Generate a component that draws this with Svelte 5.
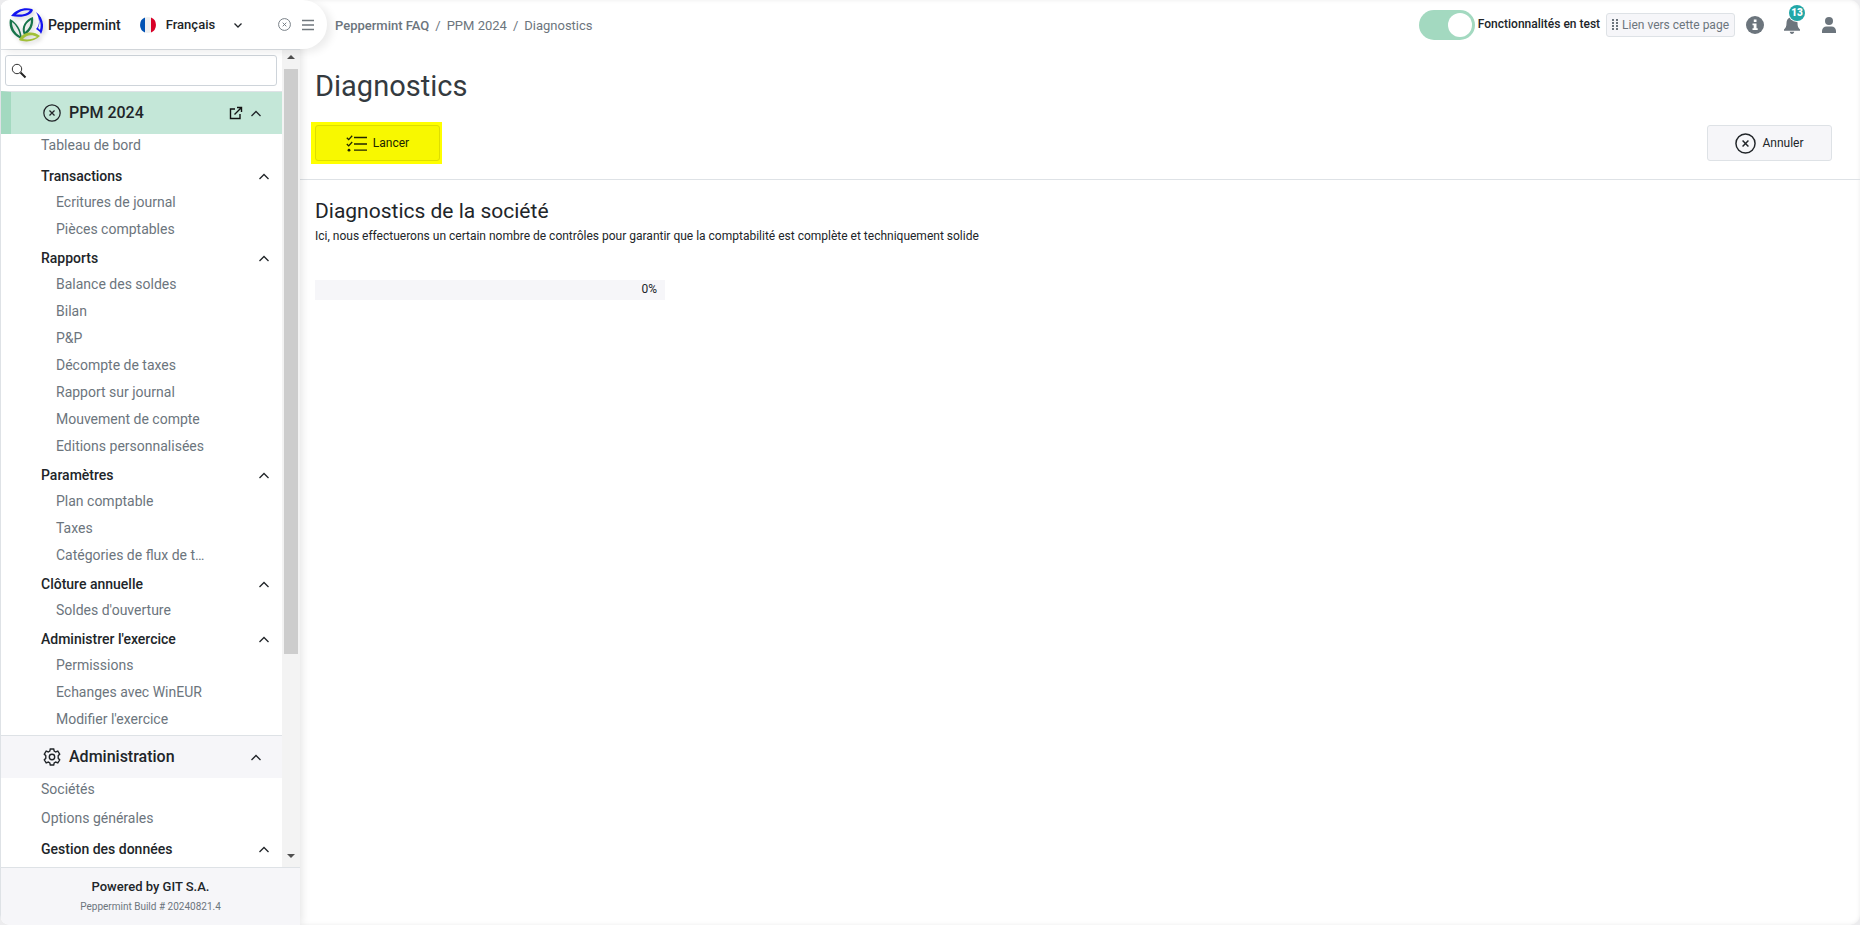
<script lang="ts">
    interface Group {
        title: string;
        items: string[];
    }

    const fiscalGroups: Group[] = [
        { title: 'Transactions', items: ['Ecritures de journal', 'Pièces comptables'] },
        {
            title: 'Rapports',
            items: [
                'Balance des soldes',
                'Bilan',
                'P&P',
                'Décompte de taxes',
                'Rapport sur journal',
                'Mouvement de compte',
                'Editions personnalisées'
            ]
        },
        { title: 'Paramètres', items: ['Plan comptable', 'Taxes', 'Catégories de flux de t…'] },
        { title: 'Clôture annuelle', items: ["Soldes d'ouverture"] },
        { title: "Administrer l'exercice", items: ['Permissions', 'Echanges avec WinEUR', "Modifier l'exercice"] }
    ];
    const adminGroups: Group[] = [{ title: 'Gestion des données', items: [] }];

    let search = $state('');
    let testing = $state(true);
    let progress = $state(0);
</script>

{#snippet chevron(up: boolean)}
    <svg class="chevron" viewBox="0 0 12 12" aria-hidden="true">
        <path d={up ? 'M1.5 9 6 4.5l4.5 4.5' : 'M2.5 4.5l3.500 3.500 3.500-3.500'} />
    </svg>
{/snippet}

{#snippet circleX(size: number)}
    <svg class="line" width={size} height={size} viewBox="0 0 20 20" aria-hidden="true">
        <circle cx="10" cy="10" r="9.1" />
        <path d="M7.2 7.2l5.6 5.6M12.8 7.2l-5.6 5.6" />
    </svg>
{/snippet}

{#snippet menu(groups: Group[])}
    {#each groups as group}
        <div class="group">
            <button class="group-title">
                {group.title}
                {@render chevron(true)}
            </button>
            {#each group.items as item}
                <a class="sub-item" href="#top">{item}</a>
            {/each}
        </div>
    {/each}
{/snippet}

<div class="page">
    <aside class="sidebar">
        <div class="brand">
            <svg class="logo" viewBox="0 0 34 34" aria-hidden="true">
                <path fill="#1414f0" d="M2 8C7 1 16-1 23 1l1 1C22 8 13 10 2 8zM7 6.500C13 7 18 6 21 2.500 16 1.500 11 3 7 6.500z" fill-rule="evenodd" />
                <path fill="#1414f0" d="M27 4c7 5 9 14 5 22-1-3-4-4-5-5 4-4 4-10 0-17zm3 7c1 4 0 7-1 9l2 2c1-4 1-7-1-11z" fill-rule="evenodd" />
                <path fill="#17744a" d="M1 11c7 4 11 10 12 20C4 28-1 20 1 11zm2 3c0 6 3 11 8 14-1-6-4-11-8-14z" fill-rule="evenodd" />
                <path fill="#17744a" d="M24 9c1 8-2 15-9 18-4-8 2-16 9-18zm-2 3c-5 3-7 7-6 12 4-3 6-7 6-12z" fill-rule="evenodd" />
                <path fill="#a2c037" d="M10 32c3-8 14-10 21-4-5 5-13 7-21 4zm4-1c5 1 10 0 14-2-5-3-11-2-14 2z" fill-rule="evenodd" />
            </svg>
            <strong>Peppermint</strong>
            <button class="language">
                <svg width="16" height="16" viewBox="0 0 16 16" aria-hidden="true">
                    <circle cx="8" cy="8" r="8" fill="#f0f0f0" />
                    <path fill="#0052b4" d="M5 .6v14.800A8 8 0 0 1 5 .6z" />
                    <path fill="#d80027" d="M11 .6v14.800A8 8 0 0 0 11 .6z" />
                </svg>
                <span>Français</span>
                {@render chevron(false)}
            </button>
            <button class="brand-button" aria-label="Fermer">{@render circleX(13)}</button>
            <button class="brand-button" aria-label="Menu">
                <svg width="12" height="12" viewBox="0 0 12 12" aria-hidden="true">
                    <path fill="none" stroke="#70777d" stroke-width="1.500" d="M0 1.500h12M0 6h12M0 10.500h12" />
                </svg>
            </button>
        </div>

        <div class="nav-area">
            <nav>
                <label class="search">
                    <svg width="16" height="16" viewBox="0 0 16 16" aria-hidden="true">
                        <circle cx="6" cy="6" r="4.700" fill="none" stroke="#333" />
                        <path stroke="#222" stroke-width="2" d="M9.500 9.500l5 5" />
                    </svg>
                    <input type="text" aria-label="Recherche" bind:value={search} />
                </label>

                <div class="section current">
                    {@render circleX(18)}
                    <span class="section-title">PPM 2024</span>
                    <svg width="14" height="14" viewBox="0 0 14 14" aria-hidden="true">
                        <path fill="none" stroke="#111" stroke-width="1.400" d="M6 3H1.500v9.500H11V8M8 1.500h4.500V6M12.500 1.500L5.500 8.500" />
                    </svg>
                    {@render chevron(true)}
                </div>
                <a class="root-item" href="#top">Tableau de bord</a>
                {@render menu(fiscalGroups)}

                <div class="section">
                    <svg class="line" width="18" height="18" viewBox="0 0 18 18" aria-hidden="true">
                        <path d="M7.300 1h3.400l.5 2.100 1.500.9 2.100-.8 1.900 2.900-1.500 1.600v2.600l1.500 1.600-1.900 2.900-2.100-.8-1.500.9-.5 2.100H7.300l-.5-2.100-1.500-.9-2.100.8-1.900-2.900 1.500-1.600V7.700L1.300 6.100l1.900-2.900 2.100.8 1.500-.9z" />
                        <circle cx="9" cy="9" r="2.700" />
                    </svg>
                    <span class="section-title">Administration</span>
                    {@render chevron(true)}
                </div>
                <a class="root-item" href="#top">Sociétés</a>
                <a class="root-item" href="#top">Options générales</a>
                {@render menu(adminGroups)}
            </nav>
            <div class="scrollbar" aria-hidden="true">
                <svg width="8" height="4" viewBox="0 0 8 4"><path d="M0 4l4-4 4 4z" /></svg>
                <div class="track"><div class="thumb"></div></div>
                <svg width="8" height="4" viewBox="0 0 8 4"><path d="M0 0l4 4 4-4z" /></svg>
            </div>
        </div>

        <footer>
            <div class="powered">Powered by GIT S.A.</div>
            <div class="build">Peppermint Build # 20240821.4</div>
        </footer>
    </aside>

    <div class="content">
        <header>
            <div class="breadcrumb">
                <a href="#top"><b>Peppermint FAQ</b></a>
                <span>/</span>
                <a href="#top">PPM 2024</a>
                <span>/</span>
                <span>Diagnostics</span>
            </div>
            <label class="switch">
                <input type="checkbox" bind:checked={testing} />
                <span>Fonctionnalités en test</span>
            </label>
            <button class="page-link">
                <svg width="6" height="11" viewBox="0 0 6 11" aria-hidden="true">
                    <path fill="#6c757d" d="M0 0h2v2H0zM4 0h2v2H4zM0 3h2v2H0zM4 3h2v2H4zM0 6h2v2H0zM4 6h2v2H4zM0 9h2v2H0zM4 9h2v2H4z" />
                </svg>
                Lien vers cette page
            </button>
            <div class="tools">
                <button class="tool" aria-label="Informations">
                    <svg width="18" height="18" viewBox="0 0 18 18" aria-hidden="true">
                        <circle cx="9" cy="9" r="9" fill="#6c757d" />
                        <path fill="#fff" d="M7.800 3.500h2.700V6H7.800zM6.500 7.500h4v4.700h1.200V14H6.500v-1.800h1.200V9.300H6.500z" />
                    </svg>
                </button>
                <button class="tool" aria-label="Notifications">
                    <svg width="16" height="18" viewBox="0 0 16 18" aria-hidden="true">
                        <path fill="#6c757d" d="M8 0c.7 0 1.200.5 1.200 1.200C12 1.800 13.500 4 13.500 7c0 3.500.8 5 2.500 6.500v1.200H0v-1.200C1.700 12 2.500 10.500 2.500 7c0-3 1.500-5.200 4.300-5.800C6.800.5 7.300 0 8 0zM5.800 15.800h4.400C10.200 17 9.200 18 8 18s-2.200-1-2.200-2.200z" />
                    </svg>
                    <span class="badge">13</span>
                </button>
                <button class="tool" aria-label="Profil">
                    <svg width="14" height="16" viewBox="0 0 14 16" aria-hidden="true">
                        <circle cx="7" cy="4" r="4" fill="#6c757d" />
                        <path fill="#6c757d" d="M0 16v-2c0-2.700 2-4.500 4.500-4.500h5C12 9.500 14 11.300 14 14v2z" />
                    </svg>
                </button>
            </div>
        </header>

        <h1>Diagnostics</h1>

        <div class="actions">
            <div class="highlight">
                <button class="action">
                    <svg width="21" height="17" viewBox="0 0 21 17" aria-hidden="true">
                        <path fill="none" stroke="currentColor" stroke-width="1.300" d="M8 2.500h13M8 9h13M8 15.200h13M.8 2.700l1.900 1.900L6.200.7M.8 9l1.900 1.900L6.200 7" />
                        <circle cx="3" cy="15.200" r="1.400" fill="currentColor" />
                    </svg>
                    Lancer
                </button>
            </div>
            <button class="action">
                {@render circleX(21)}
                Annuler
            </button>
        </div>

        <main>
            <h2>Diagnostics de la société</h2>
            <p>
                Ici, nous effectuerons un certain nombre de contrôles pour garantir que la comptabilité est complète et
                techniquement solide
            </p>
            <div class="progress" role="progressbar" aria-label="Progression" aria-valuenow={progress}>
                <div class="bar" style="width: {progress}%"></div>
                <span>{progress}%</span>
            </div>
        </main>
    </div>
</div>

<style>
:global(body) {
    margin: 0;
    background: #ececee;
}

* {
    box-sizing: border-box;
}

.page {
    display: flex;
    height: 100vh;
    font-family: Roboto, sans-serif;
    font-size: 12px;
    color: #212529;
    background: #fff;
    border-radius: 10px;
    box-shadow: inset 0 0 4px rgba(0, 0, 0, 0.08);
    overflow: hidden;
}

button {
    padding: 0;
    border: 0;
    background: none;
    font: inherit;
    color: inherit;
    cursor: pointer;
}

a {
    color: inherit;
    text-decoration: none;
}

svg {
    flex: none;
}

.line {
    fill: none;
    stroke: currentColor;
    stroke-width: 1.4;
}

.chevron {
    width: 12px;
    height: 12px;
    fill: none;
    stroke: #212529;
    stroke-width: 1.3;
}

.sidebar {
    position: relative;
    z-index: 1;
    display: flex;
    flex-direction: column;
    flex: none;
    width: 300px;
    border-left: 1px solid #dee2e6;
    background: #fff;
    box-shadow: 0 0 10px rgba(0, 0, 0, 0.15);
}

.brand {
    position: relative;
    display: flex;
    align-items: center;
    width: 326px;
    height: 49px;
    flex: none;
    padding: 0 13px 0 8px;
    border-radius: 0 25px 25px 0;
    background: #fff;
    box-shadow: 5px 3px 8px rgba(0, 0, 0, 0.08);
}

.logo {
    width: 34px;
    height: 34px;
    filter: drop-shadow(2px 2px 2px rgba(0, 0, 0, 0.2));
}

.brand strong {
    margin: 0 19px 0 5px;
    font-size: 14px;
    font-weight: 500;
}

.language {
    display: flex;
    align-items: center;
    flex: 1;
    gap: 10px;
    font-size: 13px;
    font-weight: 500;
}

.language .chevron {
    margin-left: 7px;
}

.brand-button {
    display: flex;
    margin-left: 11px;
    color: #6c757d;
}

.nav-area {
    display: flex;
    flex: 1;
    min-height: 0;
    border-top: 1px solid #dee2e6;
}

nav {
    flex: 1;
    min-width: 0;
    overflow: hidden;
}

.search {
    display: flex;
    align-items: center;
    height: 31px;
    margin: 5px 5px 5px 4px;
    padding-left: 5px;
    border: 1px solid #ced4da;
    border-radius: 3px;
}

.search input {
    flex: 1;
    min-width: 0;
    border: 0;
    outline: 0;
    font: inherit;
}

.section {
    display: flex;
    align-items: center;
    height: 43px;
    padding: 0 20px 0 42px;
    border-top: 1px solid #dee2e6;
    background: #f6f6f9;
}

.section.current {
    padding-left: 32px;
    border-left: 10px solid #a3d9c0;
    background: #c4e7d8;
}

.section-title {
    flex: 1;
    margin-left: 8px;
    padding-bottom: 2px;
    font-size: 16px;
    font-weight: 500;
}

.section .chevron {
    margin-left: 7px;
}

.root-item {
    display: block;
    height: 29px;
    padding-left: 40px;
    font-size: 14px;
    line-height: 22px;
    color: #6c757d;
}

.group {
    margin-bottom: 2px;
}

.group-title {
    display: flex;
    align-items: center;
    justify-content: space-between;
    width: 100%;
    height: 26px;
    padding: 0 12px 0 40px;
    font-size: 14px;
    font-weight: 500;
}

.sub-item {
    display: block;
    padding-left: 55px;
    font-size: 14px;
    line-height: 27px;
    color: #6c757d;
}

.scrollbar {
    display: flex;
    flex-direction: column;
    align-items: center;
    width: 18px;
    padding: 5px 2px 9px;
    background: #f3f3f3;
    fill: #505050;
}

.track {
    flex: 1;
    width: 14px;
    margin: 10px 0 5px;
}

.thumb {
    height: 75%;
    background: #cdcdcd;
}

footer {
    flex: none;
    height: 58px;
    padding-top: 9px;
    border-top: 1px solid #dee2e6;
    text-align: center;
    background: #f6f6f9;
}

.powered {
    font-size: 13px;
    font-weight: 500;
    line-height: 20px;
}

.build {
    font-size: 10px;
    line-height: 20px;
    color: #6c757d;
}

.content {
    flex: 1;
    min-width: 0;
}

header {
    display: flex;
    align-items: center;
    height: 49px;
    padding: 0 22px 0 35px;
}

.breadcrumb {
    display: flex;
    flex: 1;
    gap: 6px;
    padding-top: 1px;
    font-size: 13px;
    color: #6c757d;
}

.breadcrumb b {
    font-weight: 500;
}

.switch {
    display: flex;
    align-items: center;
    gap: 3px;
    font-weight: 500;
}

.switch span {
    padding-bottom: 2px;
}

.switch input {
    appearance: none;
    width: 56px;
    height: 30px;
    margin: 0;
    padding: 3px;
    border-radius: 15px;
    background: #ced4da;
}

.switch input::before {
    content: '';
    display: block;
    width: 24px;
    height: 24px;
    border-radius: 12px;
    background: #fff;
}

.switch input:checked {
    background: #a3d9c0;
}

.switch input:checked::before {
    margin-left: auto;
}

.page-link {
    display: flex;
    align-items: center;
    gap: 4px;
    height: 24px;
    margin: 0 11px 0 6px;
    padding: 0 5px;
    border: 1px solid #dee2e6;
    border-radius: 3px;
    color: #6c757d;
    background: #f6f6f9;
}

.tools {
    display: flex;
    align-items: center;
    gap: 19px;
}

.tool {
    position: relative;
    display: flex;
    justify-content: center;
    width: 18px;
}

.badge {
    position: absolute;
    left: 6px;
    bottom: 13px;
    width: 16px;
    border-radius: 8px;
    font-size: 10px;
    font-weight: 900;
    line-height: 16px;
    color: #fff;
    background: #22a7a7;
    box-shadow: 0 0 0 1px #fff;
}

h1 {
    margin: 19px 15px;
    font-size: 29px;
    font-weight: 400;
    line-height: 36px;
    color: #343a40;
}

.actions {
    display: flex;
    justify-content: space-between;
    padding: 2px 28px 18px 15px;
    border-bottom: 1px solid #dee2e6;
}

.action {
    display: flex;
    align-items: center;
    justify-content: center;
    gap: 6px;
    width: 125px;
    height: 36px;
    border: 1px solid #dee2e6;
    border-radius: 3px;
    background: #f6f6f9;
}

.highlight {
    margin: -3px -2px -3px -4px;
    padding: 3px 2px 3px 4px;
    background: #ffff00;
}

.highlight .action {
    border-color: #dede00;
    color: #212500;
    background: #f8f800;
}

main {
    padding: 19px 15px;
}

h2 {
    margin: 0;
    font-size: 21px;
    font-weight: 400;
    line-height: 24px;
}

p {
    margin: 5px 0 36px;
    line-height: 16px;
}

.progress {
    display: flex;
    justify-content: flex-end;
    width: 350px;
    height: 20px;
    padding-right: 8px;
    line-height: 18px;
    background: #f6f6f9;
}

.bar {
    background: #a3d9c0;
}
</style>
